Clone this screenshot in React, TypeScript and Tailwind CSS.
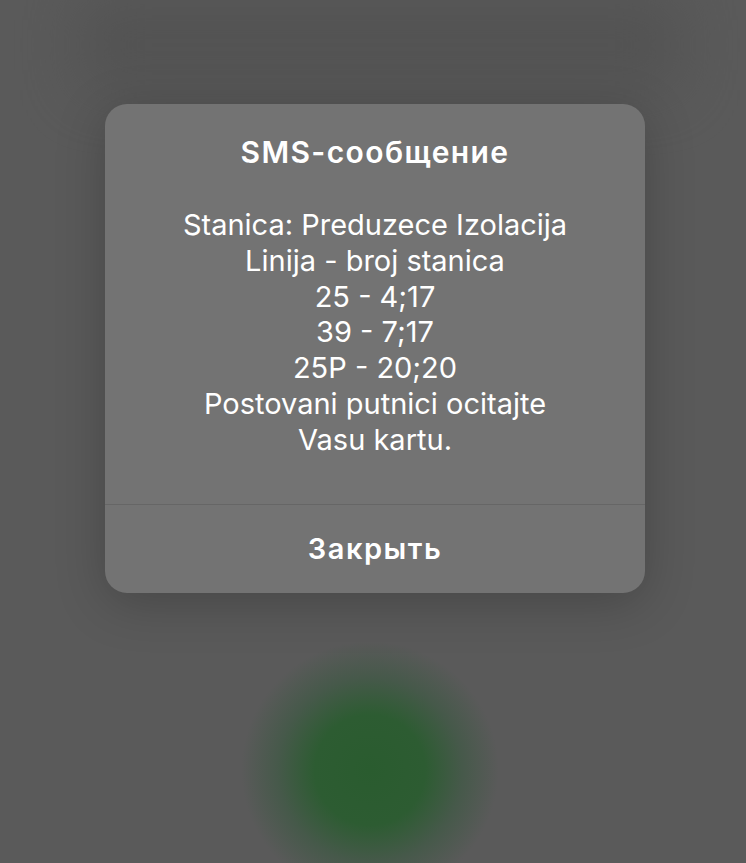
import React from "react";

const lines = [
  "Stanica: Preduzece Izolacija",
  "Linija - broj stanica",
  "25 - 4;17",
  "39 - 7;17",
  "25P - 20;20",
  "Postovani putnici ocitajte",
  "Vasu kartu.",
];

export default function App() {
  return (
    <div
      className="relative w-[746px] h-[863px] overflow-hidden bg-[#5a5a5a]"
      style={{ fontFamily: "Inter, Roboto, 'Noto Sans', sans-serif" }}
    >
      {/* blurred backdrop */}
      <div className="absolute left-[80px] top-[0px] w-[600px] h-[90px] bg-[#4e4e4e] blur-[30px] opacity-60" />
      <div className="absolute left-[240px] top-[640px] w-[260px] h-[260px] rounded-full bg-[radial-gradient(circle,#2a5c2f_0%,#2d5c32_30%,#46594a_50%,rgba(90,90,90,0)_70%)]" />

      <div className="relative flex justify-center pt-[104px] pl-[4px]">
        {/* dialog */}
        <div className="w-[540px] rounded-[22px] bg-[#737373] text-white shadow-[0_10px_50px_rgba(0,0,0,0.22)]">
          <div className="px-6 pt-[32px] pb-[46px] text-center">
            <h2 className="text-[30px] leading-[32px] font-semibold tracking-[1.4px]">
              SMS-сообщение
            </h2>
            <div className="mt-[39px] text-[29px] leading-[35.8px]">
              {lines.map((l) => (
                <p key={l}>{l}</p>
              ))}
            </div>
          </div>
          <div className="h-px bg-[#666666]" />
          <button className="w-full h-[88px] text-[29px] font-semibold tracking-[1.5px] text-white">
            Закрыть
          </button>
        </div>
      </div>
    </div>
  );
}
